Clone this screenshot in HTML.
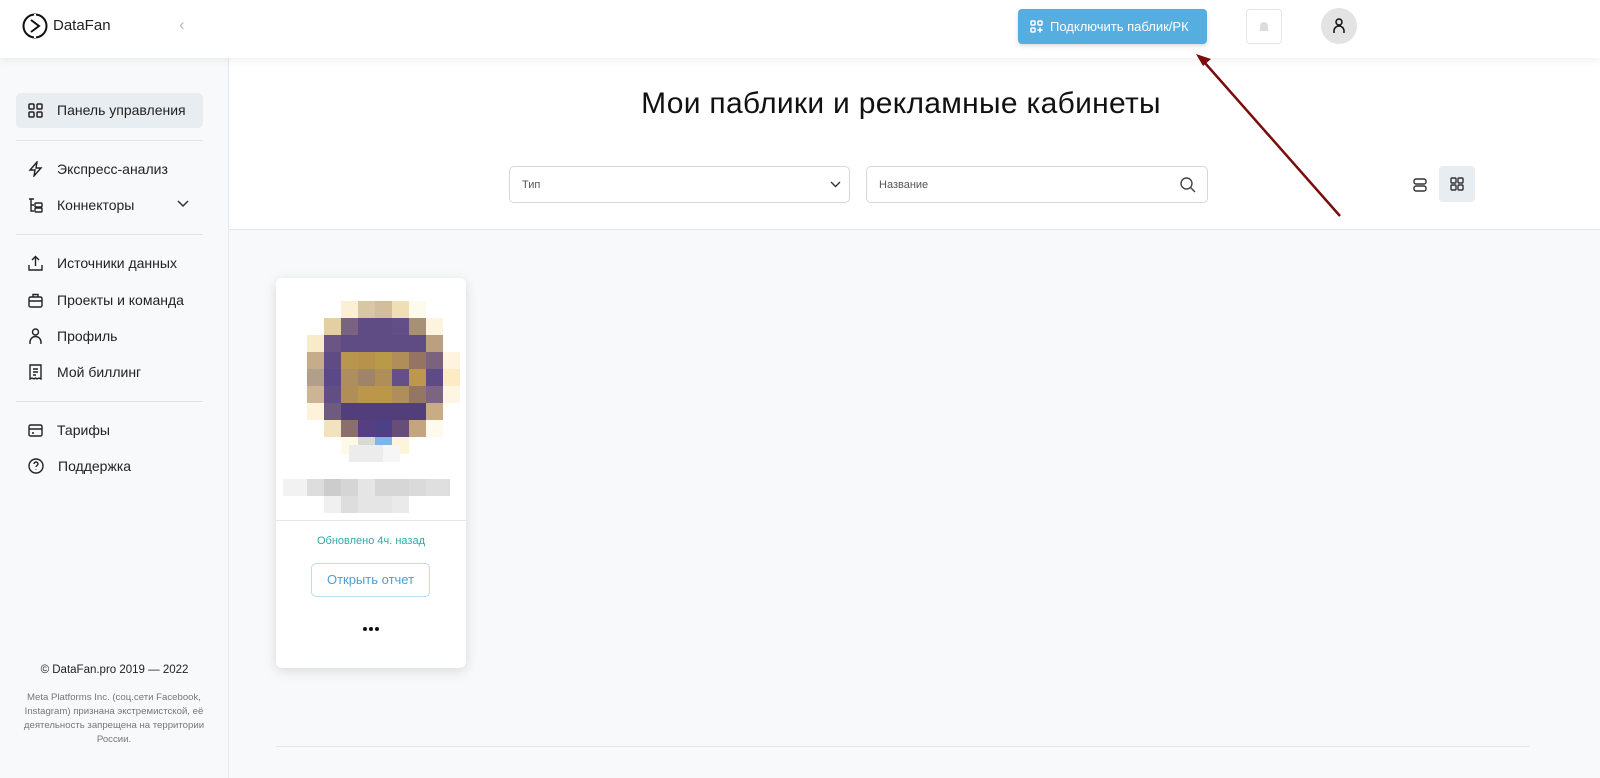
<!DOCTYPE html>
<html><head><meta charset="utf-8"><style>
*{box-sizing:border-box;margin:0;padding:0}
body{width:1600px;height:778px;overflow:hidden;background:#f8f9fb;font-family:"Liberation Sans","DejaVu Sans",sans-serif;color:#111;position:relative}
.a{position:absolute}
.hdr{left:0;top:0;width:1600px;height:58px;background:#fff;box-shadow:0 2px 8px rgba(0,0,0,.07);z-index:5}
.side{left:0;top:58px;width:229px;height:720px;background:#f8f9fb;border-right:1px solid #e6e8ea}
.nav{left:28px;font-size:14px;color:#222;display:flex;align-items:center}
.nav svg{margin-right:14px}
.sep{left:16px;width:187px;height:1px;background:#e2e4e6}
.px{position:absolute;width:17px;height:17px}
.dot{position:absolute;width:4px;height:4px;border-radius:50%;background:#111}
</style></head><body>
<div class="a hdr">
 <svg class="a" style="left:22px;top:13px" width="26" height="26" viewBox="0 0 26 26"><circle cx="13" cy="13" r="11.5" fill="none" stroke="#111" stroke-width="2"/><path d="M9 7l8 6-8 6" fill="none" stroke="#111" stroke-width="2"/><path d="M13 1v3M13 22v3" stroke="#fff" stroke-width="2"/></svg>
 <div class="a" style="left:53px;top:17px;font-size:15px;color:#222">DataFan</div>
 <div class="a" style="left:179px;top:15px;font-size:17px;color:#bbb">‹</div>
 <div class="a" style="left:1018px;top:9px;width:189px;height:35px;background:#56ade0;border-radius:4px;box-shadow:0 2px 5px rgba(0,0,0,.15);color:#fff;font-size:13px;display:flex;align-items:center;padding-left:12px">
  <svg width="13" height="13" viewBox="0 0 13 13" style="margin-right:7px" fill="none" stroke="#fff" stroke-width="1.5"><rect x="1" y="1" width="4" height="4" rx="1"/><rect x="8" y="1" width="4" height="4" rx="1"/><rect x="1" y="8" width="4" height="4" rx="1"/><path d="M10 7.5v5M7.5 10h5"/></svg>Подключить паблик/РК</div>
 <div class="a" style="left:1246px;top:9px;width:36px;height:35px;border:1px solid #e5e5e5;border-radius:4px"><svg class="a" style="left:11px;top:10px" width="12" height="13" viewBox="0 0 12 13"><path d="M2 10V6a4 4 0 018 0v4l1 1H1z M5 12h2" fill="#ddd"/></svg></div>
 <div class="a" style="left:1321px;top:8px;width:36px;height:36px;border-radius:50%;background:#e3e3e3"><svg class="a" style="left:11px;top:9px" width="14" height="17" viewBox="0 0 14 17" fill="none" stroke="#111" stroke-width="1.5"><circle cx="7" cy="5" r="3"/><path d="M2 16v-2a5 5 0 0110 0v2"/></svg></div>
</div>
<div class="a side"></div>
<div class="a" style="left:16px;top:93px;width:187px;height:35px;background:#e8edf1;border-radius:5px"></div>
<div class="a nav" style="top:102px"><svg width="15" height="15" viewBox="0 0 15 15" fill="none" stroke="#222" stroke-width="1.5"><rect x="1" y="1" width="5" height="5" rx="1"/><rect x="9" y="1" width="5" height="5" rx="1"/><rect x="1" y="9" width="5" height="5" rx="1"/><rect x="9" y="9" width="5" height="5" rx="1"/></svg>Панель управления</div>
<div class="a sep" style="top:140px"></div>
<div class="a nav" style="top:161px"><svg width="15" height="16" viewBox="0 0 15 16" fill="none" stroke="#222" stroke-width="1.4"><path d="M9 1L2 9h5l-1 6 7-8H8z"/></svg>Экспресс-анализ</div>
<div class="a nav" style="top:197px"><svg width="15" height="15" viewBox="0 0 15 15" fill="none" stroke="#222" stroke-width="1.4"><path d="M1 1h5M3 1v12h3M3 7h3"/><rect x="7" y="5" width="7" height="4" rx="1"/><rect x="7" y="10" width="7" height="4" rx="1"/></svg>Коннекторы</div>
<svg class="a" style="left:177px;top:200px" width="12" height="8" viewBox="0 0 12 8" fill="none" stroke="#333" stroke-width="1.5"><path d="M1 1l5 5 5-5"/></svg>
<div class="a sep" style="top:234px"></div>
<div class="a nav" style="top:255px"><svg width="15" height="16" viewBox="0 0 15 16" fill="none" stroke="#222" stroke-width="1.4"><path d="M7.5 11V2M4 5l3.5-3.5L11 5M1 10v5h13v-5"/></svg>Источники данных</div>
<div class="a nav" style="top:292px"><svg width="15" height="15" viewBox="0 0 15 15" fill="none" stroke="#222" stroke-width="1.4"><rect x="1" y="4" width="13" height="10" rx="1.5"/><path d="M5 4V1.5h5V4M1 8h13"/></svg>Проекты и команда</div>
<div class="a nav" style="top:328px"><svg width="15" height="16" viewBox="0 0 15 16" fill="none" stroke="#222" stroke-width="1.4"><circle cx="7.5" cy="4" r="3"/><path d="M2 16v-2a5.5 5.5 0 0111 0v2"/></svg>Профиль</div>
<div class="a nav" style="top:364px"><svg width="15" height="16" viewBox="0 0 15 16" fill="none" stroke="#222" stroke-width="1.4"><path d="M2 1h11v14l-2-1-2 1-1.5-1L6 15l-2-1-2 1z M5 5h5M5 8h5M5 11h3"/></svg>Мой биллинг</div>
<div class="a sep" style="top:401px"></div>
<div class="a nav" style="top:422px"><svg width="15" height="13" viewBox="0 0 15 13" fill="none" stroke="#222" stroke-width="1.4"><rect x="1" y="1" width="13" height="11" rx="1.5"/><path d="M1 5h13M4 9h2"/></svg>Тарифы</div>
<div class="a nav" style="top:458px"><svg width="16" height="16" viewBox="0 0 16 16" fill="none" stroke="#222" stroke-width="1.4"><circle cx="8" cy="8" r="7"/><path d="M6 6a2 2 0 114 0c0 1.5-2 1.5-2 3M8 11.5v.5"/></svg>Поддержка</div>
<div class="a" style="left:0;top:664px;width:229px;text-align:center;font-size:11.5px;color:#222">© DataFan.pro 2019 — 2022</div>
<div class="a" style="left:14px;top:691px;width:200px;text-align:center;font-size:9.6px;line-height:14px;color:#777">Meta Platforms Inc. (соц.сети Facebook, Instagram) признана экстремистской, её деятельность запрещена на территории России.</div>

<div class="a" style="left:229px;top:58px;width:1371px;height:172px;background:#fff;border-bottom:1px solid #e3e5e7"></div>
<div class="a" style="left:229px;top:87px;width:1344px;text-align:center;font-size:30px;letter-spacing:0.3px;color:#111">Мои паблики и рекламные кабинеты</div>
<div class="a" style="left:509px;top:166px;width:341px;height:37px;border:1px solid #d7d7d7;border-radius:5px;background:#fff;font-size:11px;color:#555;padding:12px 0 0 12px">Тип<svg class="a" style="left:320px;top:14px" width="11" height="7" viewBox="0 0 11 7" fill="none" stroke="#333" stroke-width="1.4"><path d="M1 1l4.5 4.5L10 1"/></svg></div>
<div class="a" style="left:866px;top:166px;width:342px;height:37px;border:1px solid #d7d7d7;border-radius:5px;background:#fff;font-size:11px;color:#555;padding:12px 0 0 12px">Название<svg class="a" style="left:313px;top:10px" width="16" height="16" viewBox="0 0 16 16" fill="none" stroke="#444" stroke-width="1.4"><circle cx="6.5" cy="6.5" r="5.5"/><path d="M10.5 10.5L15 15"/></svg></div>
<svg class="a" style="left:1413px;top:178px" width="14" height="14" viewBox="0 0 14 14" fill="none" stroke="#333" stroke-width="1.4"><rect x="1" y="1" width="12" height="5" rx="2"/><rect x="1" y="8" width="12" height="5" rx="2"/></svg>
<div class="a" style="left:1439px;top:166px;width:36px;height:36px;background:#e8edf1;border-radius:4px"><svg class="a" style="left:11px;top:11px" width="14" height="14" viewBox="0 0 14 14" fill="none" stroke="#333" stroke-width="1.4"><rect x="1" y="1" width="5" height="5" rx="1"/><rect x="8" y="1" width="5" height="5" rx="1"/><rect x="1" y="8" width="5" height="5" rx="1"/><rect x="8" y="8" width="5" height="5" rx="1"/></svg></div>
<div class="a" style="left:276px;top:746px;width:1253px;height:1px;background:#e3e5e7"></div>

<div class="a" style="left:276px;top:278px;width:190px;height:390px;background:#fff;border-radius:6px;box-shadow:0 3px 12px rgba(0,0,0,.13)"></div>
<div class="a" style="left:276px;top:520px;width:190px;height:1px;background:#e5e5e5"></div>
<div id="g">
<div class="px" style="left:341px;top:301px;background:#FBF0D5"></div><div class="px" style="left:358px;top:301px;background:#D9C7A4"></div><div class="px" style="left:375px;top:301px;background:#D2BD9C"></div><div class="px" style="left:392px;top:301px;background:#EEDFB5"></div><div class="px" style="left:409px;top:301px;background:#FEFAEC"></div>
<div class="px" style="left:324px;top:318px;background:#E3CFA2"></div><div class="px" style="left:341px;top:318px;background:#7A6283"></div><div class="px" style="left:358px;top:318px;background:#5F4C85"></div><div class="px" style="left:375px;top:318px;background:#5F4C85"></div><div class="px" style="left:392px;top:318px;background:#624F88"></div><div class="px" style="left:409px;top:318px;background:#A89077"></div><div class="px" style="left:426px;top:318px;background:#FCF4DE"></div>
<div class="px" style="left:307px;top:335px;background:#F8EBC9"></div><div class="px" style="left:324px;top:335px;background:#6B5584"></div><div class="px" style="left:341px;top:335px;width:85px;background:#5F4C85"></div><div class="px" style="left:426px;top:335px;background:#BA9F80"></div>
<div class="px" style="left:307px;top:352px;background:#C5AC8A"></div><div class="px" style="left:324px;top:352px;background:#5F4C85"></div><div class="px" style="left:341px;top:352px;background:#B8964E"></div><div class="px" style="left:358px;top:352px;background:#B6924C"></div><div class="px" style="left:375px;top:352px;background:#B89A48"></div><div class="px" style="left:392px;top:352px;background:#B08E5A"></div><div class="px" style="left:409px;top:352px;background:#957463"></div><div class="px" style="left:426px;top:352px;background:#7A6280"></div><div class="px" style="left:443px;top:352px;background:#FFF4DD"></div>
<div class="px" style="left:307px;top:369px;background:#B19E8B"></div><div class="px" style="left:324px;top:369px;background:#5A4887"></div><div class="px" style="left:341px;top:369px;background:#AE8E5E"></div><div class="px" style="left:358px;top:369px;background:#A08469"></div><div class="px" style="left:375px;top:369px;background:#AF8E5A"></div><div class="px" style="left:392px;top:369px;background:#654F87"></div><div class="px" style="left:409px;top:369px;background:#BC974D"></div><div class="px" style="left:426px;top:369px;background:#5E4A85"></div><div class="px" style="left:443px;top:369px;background:#FEEBC4"></div>
<div class="px" style="left:307px;top:386px;background:#CDB594"></div><div class="px" style="left:324px;top:386px;background:#624E84"></div><div class="px" style="left:341px;top:386px;background:#B08E56"></div><div class="px" style="left:358px;top:386px;background:#BC974A"></div><div class="px" style="left:375px;top:386px;background:#BB9748"></div><div class="px" style="left:392px;top:386px;background:#AF8E5C"></div><div class="px" style="left:409px;top:386px;background:#957664"></div><div class="px" style="left:426px;top:386px;background:#7C6483"></div><div class="px" style="left:443px;top:386px;background:#FEF6E3"></div>
<div class="px" style="left:307px;top:403px;background:#FDF3DA"></div><div class="px" style="left:324px;top:403px;background:#6F5A80"></div><div class="px" style="left:341px;top:403px;width:85px;background:#533E7C"></div><div class="px" style="left:426px;top:403px;background:#C8AC84"></div>
<div class="px" style="left:324px;top:420px;background:#F3E2BE"></div><div class="px" style="left:341px;top:420px;background:#8A6F6C"></div><div class="px" style="left:358px;top:420px;background:#563F80"></div><div class="px" style="left:375px;top:420px;background:#4C4086"></div><div class="px" style="left:392px;top:420px;background:#674E78"></div><div class="px" style="left:409px;top:420px;background:#C3A580"></div><div class="px" style="left:426px;top:420px;background:#FEFAEE"></div>
<div class="px" style="left:341px;top:437px;background:#FEF9E8"></div><div class="px" style="left:358px;top:437px;background:#D8DBD0"></div><div class="px" style="left:375px;top:437px;background:#80B4E8"></div><div class="px" style="left:392px;top:437px;background:#FEF4DA"></div>
<div class="px" style="left:349px;top:445px;width:34px;background:#ECECEC"></div><div class="px" style="left:383px;top:445px;background:#F5F6F5"></div>
<div class="px" style="left:283px;top:479px;width:24px;background:#F2F2F2"></div><div class="px" style="left:307px;top:479px;background:#DDD"></div><div class="px" style="left:324px;top:479px;background:#CCC"></div><div class="px" style="left:341px;top:479px;background:#D5D5D5"></div><div class="px" style="left:358px;top:479px;background:#E5E5E5"></div><div class="px" style="left:375px;top:479px;width:34px;background:#D6D6D6"></div><div class="px" style="left:409px;top:479px;background:#DADADA"></div><div class="px" style="left:426px;top:479px;width:24px;background:#DFDFDF"></div>
<div class="px" style="left:324px;top:496px;background:#F0F0F0"></div><div class="px" style="left:341px;top:496px;background:#DDD"></div><div class="px" style="left:358px;top:496px;width:34px;background:#E5E5E5"></div><div class="px" style="left:392px;top:496px;background:#EAEAEA"></div>
</div>
<div class="a" style="left:276px;top:535px;width:190px;text-align:center;font-size:11px;color:#2fa9a9">Обновлено 4ч. назад</div>
<div class="a" style="left:311px;top:563px;width:119px;height:34px;border:1px solid #b9dcf2;border-radius:5px;text-align:center;font-size:13px;line-height:32px;color:#4a9fd8">Открыть отчет</div>
<div class="dot" style="left:363px;top:627px"></div><div class="dot" style="left:369px;top:627px"></div><div class="dot" style="left:375px;top:627px"></div>

<svg class="a" style="left:0;top:0;z-index:10" width="1600" height="778"><line x1="1340" y1="216" x2="1205" y2="63" stroke="#7a0c0c" stroke-width="2.5"/><path d="M1196 54l15 5-8 7z" fill="#7a0c0c"/></svg>
</body></html>
